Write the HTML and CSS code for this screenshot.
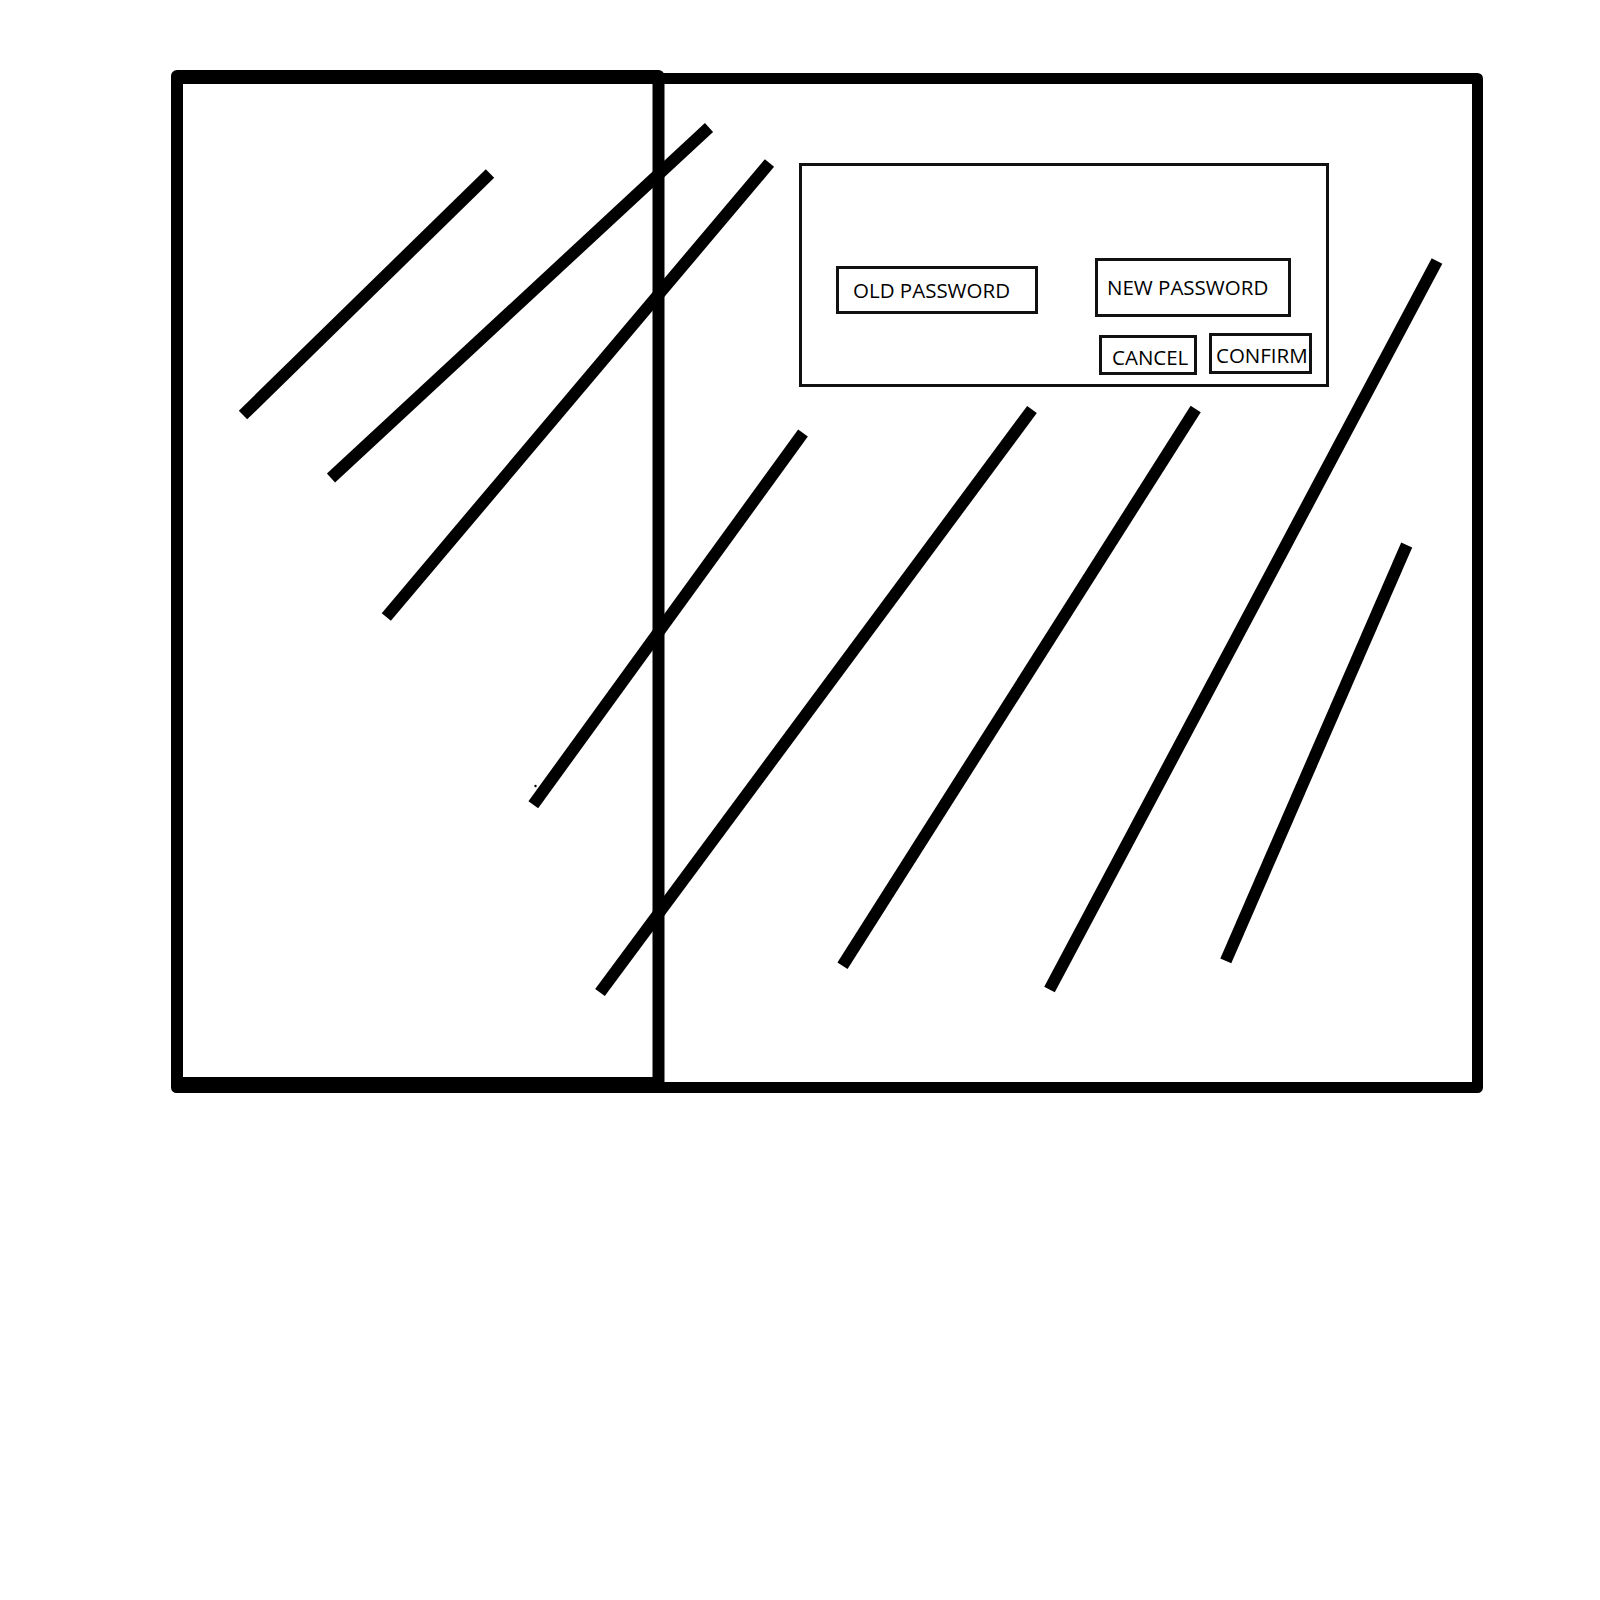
FILE: index.html
```html
<!DOCTYPE html>
<html lang="en">
<head>
<meta charset="utf-8">
<title>Change password sketch</title>
<link rel="stylesheet" href="styles.css">
</head>
<body>
<div class="canvas">
  <svg class="sketch" width="1600" height="1600" viewBox="0 0 1600 1600" xmlns="http://www.w3.org/2000/svg">
    <rect x="176.5" y="78.5" width="1301" height="1009" class="frame-outer"/>
    <path d="M177 1083 V76 H658.5 V1083 Z" class="frame-left"/>
    <g class="hatch">
      <line x1="243" y1="415" x2="490" y2="173.5"/>
      <line x1="331" y1="478" x2="709" y2="127.5"/>
      <line x1="386.3" y1="617" x2="769.5" y2="163"/>
      <line x1="533.3" y1="804.7" x2="803" y2="433"/>
      <line x1="600" y1="992.5" x2="1032" y2="409.5"/>
      <line x1="842.5" y1="965.7" x2="1195.7" y2="409"/>
      <line x1="1049.5" y1="989.5" x2="1437" y2="261"/>
      <line x1="1225.8" y1="960.8" x2="1406.7" y2="545"/>
    </g>
    <circle cx="535.5" cy="786" r="1.2" fill="#000"/>
  </svg>

  <div class="dialog">
    <div class="field-row">
      <div class="box field-old">OLD PASSWORD</div>
      <div class="box field-new">NEW PASSWORD</div>
    </div>
    <div class="button-row">
      <div class="box btn-cancel">CANCEL</div>
      <div class="box btn-confirm">CONFIRM</div>
    </div>
  </div>
</div>
</body>
</html>
```

FILE: styles.css
```css
html, body {
  margin: 0;
  padding: 0;
  background: #ffffff;
}

.canvas {
  position: relative;
  width: 1600px;
  height: 1600px;
  font-family: "Open Sans", "Noto Sans", sans-serif;
  color: #000000;
}

.sketch {
  position: absolute;
  left: 0;
  top: 0;
  display: block;
}

.frame-outer,
.frame-left {
  fill: none;
  stroke: #000000;
  stroke-linejoin: round;
}

.frame-outer {
  stroke-width: 11;
}

.frame-left {
  stroke-width: 12;
}

.hatch line {
  stroke: #000000;
  stroke-width: 12;
  stroke-linecap: butt;
}

.dialog {
  position: absolute;
  left: 799px;
  top: 163px;
  width: 530px;
  height: 224px;
  box-sizing: border-box;
  border: 3px solid #111111;
  padding-top: 92px;
  background: #ffffff;
}

.box {
  box-sizing: border-box;
  border: 3px solid #111111;
  font-size: 20.5px;
  line-height: 20px;
  white-space: nowrap;
}

.field-row {
  display: flex;
  align-items: flex-start;
}

.field-old {
  width: 202px;
  height: 48px;
  margin-left: 34px;
  margin-top: 8px;
  padding: 11px 0 0 14px;
}

.field-new {
  width: 196px;
  height: 59px;
  margin-left: 57px;
  padding: 16px 0 0 9px;
}

.button-row {
  display: flex;
  align-items: flex-start;
  margin-left: 297px;
}

.btn-cancel {
  width: 98px;
  height: 40px;
  margin-top: 18px;
  padding: 8.5px 0 0 10px;
}

.btn-confirm {
  width: 103px;
  height: 41px;
  margin-top: 16px;
  margin-left: 12px;
  padding: 8.5px 0 0 4px;
}
```
